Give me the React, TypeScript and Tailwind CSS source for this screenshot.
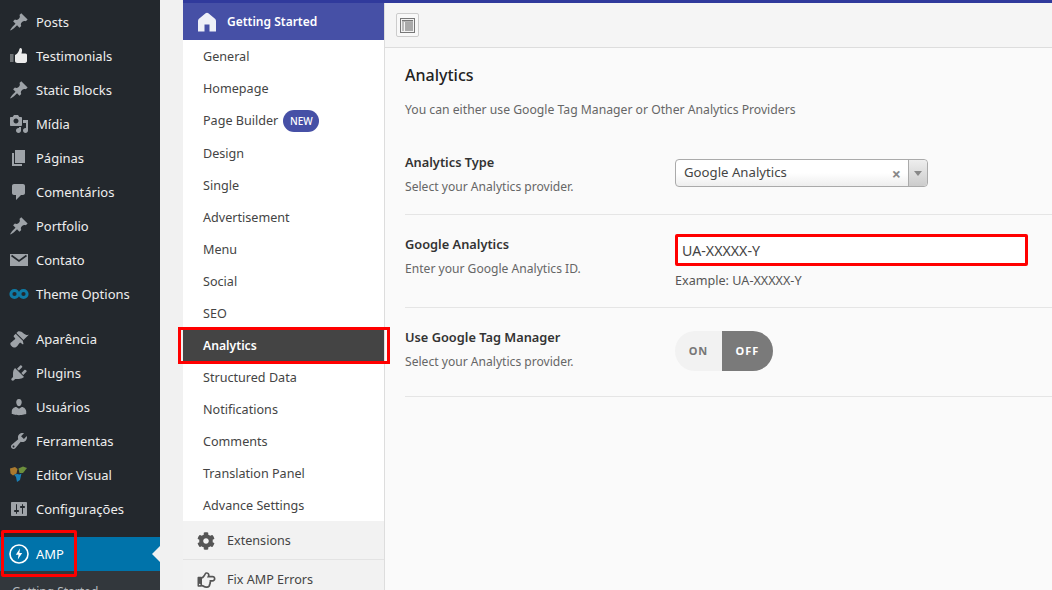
import { FaCog, FaRegHandPointRight } from "react-icons/fa";

const PIN =
  "M10.44 3.02l1.82-1.82 6.36 6.35-1.83 1.82c-1.05-.68-2.48-.57-3.41.36l-.75.75c-.92.93-1.04 2.35-.35 3.41l-1.83 1.82-2.41-2.41-2.8 2.79c-.42.42-3.38 2.71-3.8 2.29s1.86-3.39 2.28-3.81l2.79-2.79L4.1 9.36l1.83-1.82c1.05.69 2.48.57 3.4-.36l.75-.75c.93-.92 1.05-2.35.36-3.41z";
const MEDIA =
  "M13 11V4c0-.55-.45-1-1-1h-1.67L9 1H5L3.67 3H2c-.55 0-1 .45-1 1v7c0 .55.45 1 1 1h10c.55 0 1-.45 1-1zM7 4.5c1.38 0 2.5 1.12 2.5 2.5S8.38 9.5 7 9.5 4.5 8.38 4.5 7 5.62 4.5 7 4.5zM14 6h5v10.5c0 1.38-1.12 2.5-2.5 2.5S14 17.88 14 16.5s1.12-2.5 2.5-2.5c.17 0 .34.02.5.05V9h-3V6zm-4 8.05V13h2v3.5c0 1.38-1.12 2.5-2.5 2.5S7 17.88 7 16.5 8.12 14 9.5 14c.17 0 .34.02.5.05z";
const PAGES = "M6 15V2h10v13H6zm-1 1h8v2H3V5h2v11z";
const COMMENT =
  "M5 2h9c1.1 0 2 .9 2 2v7c0 1.1-.9 2-2 2h-2l-5 5v-5H5c-1.1 0-2-.9-2-2V4c0-1.1.9-2 2-2z";
const BRUSH =
  "M14.48 11.06L7.41 3.99l1.5-1.5c.5-.56 2.3-.47 3.51.32 1.21.8 1.43 1.28 2.91 2.1 1.18.64 2.45 1.26 4.45.85zm-.71.71L6.7 4.7 4.93 6.47c-.39.39-.39 1.02 0 1.41l1.06 1.06c.39.39.39 1.03 0 1.42-.6.6-1.43 1.11-2.21 1.69-.35.26-.7.53-1.01.84C1.43 13.23.43 14.96 2.72 17.25c2.28 2.29 4.02 1.29 5.36-.05.31-.31.58-.66.84-1.01.58-.78 1.09-1.61 1.69-2.21.39-.39 1.02-.39 1.41 0l1.06 1.06c.39.39 1.02.39 1.41 0z";
const PLUG =
  "M13.11 4.36L9.87 7.6 8 5.73l3.24-3.24c.35-.34 1.05-.2 1.56.32.52.51.66 1.21.31 1.55zm-8 1.77l.91-1.12 9.01 9.01-1.19.84c-.71.71-2.63 1.16-3.82 1.16H6.14L4.9 17.26c-.59.59-1.54.59-2.12 0-.59-.58-.59-1.53 0-2.12l1.24-1.24v-3.88c0-1.13.4-3.19 1.09-3.89zm7.26 3.97l3.24-3.24c.34-.35 1.04-.21 1.55.31.52.51.66 1.21.31 1.55l-3.24 3.25z";
const USER =
  "M10 9.25c-2.27 0-2.73-3.44-2.73-3.44C7 4.02 7.82 2 9.97 2c2.16 0 2.98 2.02 2.71 3.81 0 0-.41 3.44-2.68 3.44zm0 2.57L12.72 10c2.39 0 4.52 2.33 4.52 4.53v2.49s-3.65 1.13-7.24 1.13c-3.65 0-7.24-1.13-7.24-1.13v-2.49c0-2.25 1.94-4.48 4.47-4.48z";
const WRENCH =
  "M16.68 9.77c-1.34 1.34-3.3 1.67-4.95.99l-5.41 6.52c-.99.99-2.59.99-3.58 0s-.99-2.59 0-3.57l6.52-5.42c-.68-1.65-.35-3.61.99-4.95 1.28-1.28 3.12-1.62 4.72-1.06l-2.89 2.89 2.82 2.82 2.86-2.87c.53 1.58.18 3.39-1.08 4.65zM3.81 16.21c.4.39 1.04.39 1.43 0 .4-.4.4-1.04 0-1.43-.39-.4-1.03-.4-1.43 0-.39.39-.39 1.03 0 1.43z";
const SLIDERS =
  "M18 16V4c0-.55-.45-1-1-1H3c-.55 0-1 .45-1 1v12c0 .55.45 1 1 1h14c.55 0 1-.45 1-1zM8 11h1c.55 0 1 .45 1 1s-.45 1-1 1H8v1.5c0 .28-.22.5-.5.5s-.5-.22-.5-.5V13H6c-.55 0-1-.45-1-1s.45-1 1-1h1V5.5c0-.28.22-.5.5-.5s.5.22.5.5V11zm5-2h-1c-.55 0-1-.45-1-1s.45-1 1-1h1V5.5c0-.28.22-.5.5-.5s.5.22.5.5V7h1c.55 0 1 .45 1 1s-.45 1-1 1h-1v5.5c0 .28-.22.5-.5.5s-.5-.22-.5-.5V9z";

function Dash({ d }: { d: string }) {
  return (
    <svg viewBox="0 0 20 20" className="h-5 w-5 fill-[#9ea3a8]">
      <path d={d} />
    </svg>
  );
}

function MailIcon() {
  return (
    <svg viewBox="0 0 20 20" className="h-5 w-5">
      <rect x="1" y="4" width="18" height="12" fill="#9ea3a8" />
      <path d="M2.5 5.5L10 11l7.5-5.5" fill="none" stroke="#23282d" strokeWidth="1.6" />
    </svg>
  );
}

function ThumbIcon() {
  return (
    <svg viewBox="0 0 20 20" className="h-5 w-5">
      <rect x="1" y="8" width="3.5" height="8" fill="#6f7376" />
      <path
        d="M6 9c2-1 3-2.500 4-4.500.3-1 .5-2.500 1.500-2.500 1.300 0 1.700 1.500 1.500 3L12.500 7.500H16.500c1 0 1.500.8 1.500 1.600v6c0 1-.8 1.900-2 1.900H8.500C7 17 6 16 6 15z"
        fill="#ececec"
      />
    </svg>
  );
}

function InfinityIcon() {
  return (
    <svg viewBox="0 0 20 20" className="h-5 w-5 fill-none stroke-[#0f7aa5] stroke-[3]">
      <circle cx="5.5" cy="10" r="3.6" />
      <circle cx="14.5" cy="10" r="3.6" />
    </svg>
  );
}

function ComposerIcon() {
  return (
    <svg viewBox="0 0 20 20" className="h-5 w-5">
      <polygon points="1,3.500 6,2 8.500,4 7.500,8.500 4,10.500 1.500,8.500" fill="#a9792f" />
      <polygon points="9.500,3.500 14,1.500 18,3 14,8 10.500,8" fill="#6c8f3c" />
      <polygon points="5,9.500 8.500,9 10.500,9.500 12.500,8.500 11,15 8,17 7,12" fill="#1a7fb5" />
    </svg>
  );
}

function AmpIcon() {
  return (
    <svg viewBox="0 0 20 20" className="h-5 w-5 fill-none stroke-white stroke-[1.6]">
      <circle cx="10" cy="10" r="9" />
      <path d="M11 4.5L6.800 10.800h2.700L8.800 15.500l4.400-6.500h-2.800z" className="fill-white stroke-none" />
    </svg>
  );
}

function HomeIcon() {
  return (
    <svg viewBox="0 0 20 20" className="h-5 w-5 fill-[#eef0f8]">
      <path d="M10 .8c.5 0 1 .2 1.400.5l6.600 5.400c.7.600 1 1.300 1 2.200V19.500h-6.500v-7h-5v7H1V8.900c0-.9.300-1.600 1-2.200L8.600 1.300c.4-.3.900-.5 1.400-.5z" />
    </svg>
  );
}

type MenuEntry = { label: string; icon: React.ReactNode; gap?: boolean };

const menu: MenuEntry[] = [
  { label: "Posts", icon: <Dash d={PIN} /> },
  { label: "Testimonials", icon: <ThumbIcon /> },
  { label: "Static Blocks", icon: <Dash d={PIN} /> },
  { label: "Mídia", icon: <Dash d={MEDIA} /> },
  { label: "Páginas", icon: <Dash d={PAGES} /> },
  { label: "Comentários", icon: <Dash d={COMMENT} /> },
  { label: "Portfolio", icon: <Dash d={PIN} /> },
  { label: "Contato", icon: <MailIcon /> },
  { label: "Theme Options", icon: <InfinityIcon /> },
  { label: "Aparência", icon: <Dash d={BRUSH} />, gap: true },
  { label: "Plugins", icon: <Dash d={PLUG} /> },
  { label: "Usuários", icon: <Dash d={USER} /> },
  { label: "Ferramentas", icon: <Dash d={WRENCH} /> },
  { label: "Editor Visual", icon: <ComposerIcon /> },
  { label: "Configurações", icon: <Dash d={SLIDERS} /> },
];

const sections = [
  "General",
  "Homepage",
  "Page Builder",
  "Design",
  "Single",
  "Advertisement",
  "Menu",
  "Social",
  "SEO",
  "Analytics",
  "Structured Data",
  "Notifications",
  "Comments",
  "Translation Panel",
  "Advance Settings",
];

function AdminMenu() {
  return (
    <div className="w-40 shrink-0 bg-[#23282d] pt-[5px] text-[#eeeeee]">
      {menu.map((m) => (
        <div key={m.label} className={`flex h-[34px] items-center ${m.gap ? "mt-[11px]" : ""}`}>
          <span className="flex w-9 justify-center pl-[1px]">{m.icon}</span>
          <span className="pt-[2px]">{m.label}</span>
        </div>
      ))}
      <div className="relative mt-[11px] flex h-[34px] items-center bg-[#0073aa] text-white">
        <span className="flex w-9 justify-center pl-[1px]">
          <AmpIcon />
        </span>
        <span className="pt-[2px]">AMP</span>
        <div className="absolute right-0 top-[9px] h-0 w-0 border-y-8 border-r-8 border-y-transparent border-r-[#f1f1f1]" />
        <div className="absolute left-[1px] top-[-7px] h-[47px] w-[76px] rounded-[2px] border-[3px] border-[#ff0000]" />
      </div>
      <div className="h-20 bg-[#32373c] pl-3 pt-[12px] text-[12px] text-[#b4b9be]">Getting Started</div>
    </div>
  );
}

function SectionNav() {
  return (
    <div className="w-[202px] shrink-0 border-r border-[#dddddd] bg-[#f2f2f2] text-[12.6px] text-[#444444]">
      <div className="flex h-[37px] items-center bg-[#4650a6] pl-[14px] text-[12px] font-semibold text-white">
        <HomeIcon />
        <span className="ml-[10px]">Getting Started</span>
      </div>
      <div className="bg-white">
        {sections.map((s) => (
          <div
            key={s}
            className={`relative flex h-8 items-center pl-5 pt-[2px] ${
              s === "Analytics" ? "bg-[#444444] text-[12.2px] font-semibold text-white" : ""
            } ${s === "Design" ? "mt-[1px]" : ""}`}
          >
            {s}
            {s === "Page Builder" && (
              <span className="ml-[5px] flex h-[22px] w-9 items-center justify-center rounded-full bg-[#4650a6] text-[10px] font-medium text-white">
                NEW
              </span>
            )}
            {s === "Analytics" && (
              <div className="absolute -bottom-[3px] -left-[5px] -right-[6px] -top-[2px] border-[3px] border-[#ff0000]" />
            )}
          </div>
        ))}
      </div>
      <div className="flex h-[39px] items-center border-b border-[#e3e3e3] pl-[14px] pt-[1px]">
        <FaCog className="h-[18px] w-[18px] text-[#555555]" />
        <span className="ml-[12px] pt-[2px]">Extensions</span>
      </div>
      <div className="flex h-[39px] items-center pl-[14px]">
        <FaRegHandPointRight className="h-[18px] w-[19px] text-[#555555]" />
        <span className="ml-[11px] pt-[2px]">Fix AMP Errors</span>
      </div>
    </div>
  );
}

function Row({
  title,
  desc,
  className,
  children,
}: {
  title: string;
  desc: string;
  className: string;
  children: React.ReactNode;
}) {
  return (
    <div className={`flex border-b border-[#e5e5e5] ${className}`}>
      <div className="w-[270px] shrink-0">
        <div className="text-[12.8px] font-semibold leading-[20px] text-[#333333]">{title}</div>
        <div className="mt-[5px] text-[12.1px] leading-[20px] text-[#666666]">{desc}</div>
      </div>
      <div>{children}</div>
    </div>
  );
}

function Content() {
  return (
    <div className="min-w-0 flex-1 bg-[#fafafa]">
      <div className="flex h-[45px] items-start border-b border-[#dddddd] bg-[#f5f5f5] pl-[11px] pt-[10px]">
        <div className="flex h-[24px] w-[23px] items-center justify-center rounded-[2px] border border-[#cccccc] bg-[#f8f8f8]">
          <svg viewBox="0 0 15 15" className="h-[15px] w-[15px]">
            <rect x="0.5" y="0.5" width="14" height="14" fill="#f2f2f2" stroke="#777777" />
            <rect x="2" y="2" width="11" height="1.500" fill="#777777" />
            <rect x="2" y="4" width="2" height="9" fill="#bbbbbb" />
            <rect x="5" y="4" width="8" height="9" fill="#aaaaaa" />
          </svg>
        </div>
      </div>
      <div className="pl-[20px]">
        <h1 className="mt-[15px] text-[16px] font-medium leading-[24px] text-[#222222]">Analytics</h1>
        <p className="mt-[14px] text-[12.2px] text-[#666666]">
          You can either use Google Tag Manager or Other Analytics Providers
        </p>
        <Row title="Analytics Type" desc="Select your Analytics provider." className="mt-[33px] h-[63px]">
          <div className="relative mt-[7px] flex h-[28px] w-[253px] items-center rounded-[4px] border border-[#aaaaaa] bg-linear-to-b from-white from-50% to-[#eeeeee] pl-2 text-[13.2px] text-[#444444]">
            Google Analytics
            <span className="absolute right-[26px] top-[2px] text-[16px] font-bold text-[#888888]">×</span>
            <div className="absolute bottom-0 right-0 top-0 flex w-[19px] items-center justify-center rounded-r-[4px] border-l border-[#aaaaaa] bg-linear-to-b from-[#eeeeee] to-[#cccccc]">
              <div className="h-0 w-0 border-x-[4px] border-t-[5px] border-x-transparent border-t-[#888888]" />
            </div>
          </div>
        </Row>
        <Row title="Google Analytics" desc="Enter your Google Analytics ID." className="h-[93px] pt-[19px]">
          <div className="flex h-[32px] w-[353px] items-center rounded-[2px] border-[3px] border-[#ff0000] bg-white pl-1 text-[14.2px] text-[#444444]">
            UA-XXXXX-Y
          </div>
          <div className="mt-[5px] text-[12.6px] leading-[20px] text-[#555555]">Example: UA-XXXXX-Y</div>
        </Row>
        <Row title="Use Google Tag Manager" desc="Select your Analytics provider." className="h-[89px] pt-[19px]">
          <div className="mt-[4px] flex h-[40px] w-[98px] overflow-hidden rounded-full text-[11px] font-bold tracking-[1px]">
            <div className="flex w-[47px] items-center justify-center bg-[#f2f2f2] text-[#777777]">ON</div>
            <div className="flex flex-1 items-center justify-center bg-[#7a7a7a] text-white">OFF</div>
          </div>
        </Row>
      </div>
    </div>
  );
}

export default function App() {
  return (
    <div className="flex h-[590px] w-[1052px] overflow-hidden bg-[#f1f1f1] font-['Noto_Sans',sans-serif] text-[13px]">
      <AdminMenu />
      <div className="ml-[23px] flex min-w-0 flex-1 flex-col">
        <div className="h-[3px] shrink-0 bg-[#303a9c]" />
        <div className="flex min-h-0 flex-1">
          <SectionNav />
          <Content />
        </div>
      </div>
    </div>
  );
}
